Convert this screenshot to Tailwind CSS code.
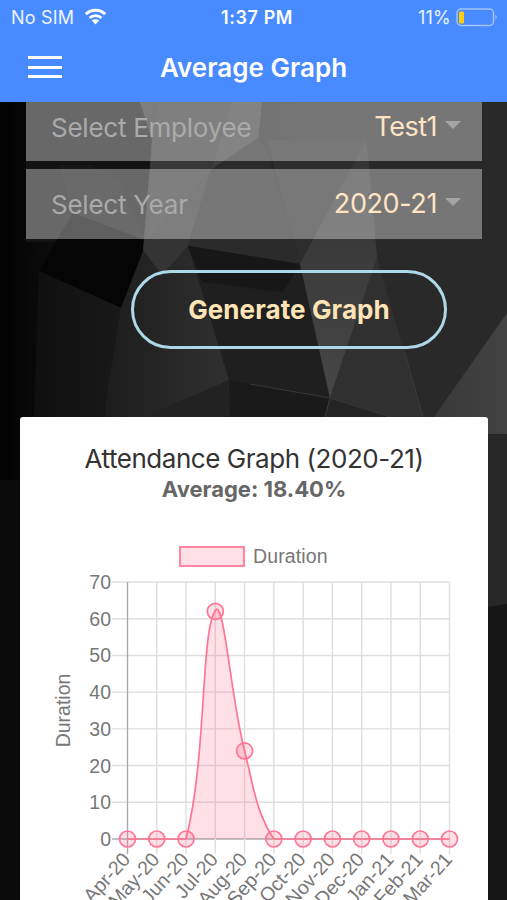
<!DOCTYPE html>
<html lang="en">
<head>
  <meta charset="UTF-8" />
  <meta name="viewport" content="width=device-width, initial-scale=1.0"/>
  <title>Average Graph</title>
  <script src="https://cdn.jsdelivr.net/npm/@tailwindcss/browser@4"></script>
</head>

<body class="bg-[#141414] font-[Inter,sans-serif]">
<div class="relative isolate flex flex-col w-[507px] h-[900px] overflow-hidden">

  <!-- Low-poly backdrop -->
  <svg class="absolute inset-0 -z-10" width="507" height="900" viewBox="0 0 507 900">
    <defs>
      <linearGradient id="base"><stop offset="0" stop-color="#030303"/><stop offset=".3" stop-color="#1c1c1c"/><stop offset=".6" stop-color="#292929"/><stop offset="1" stop-color="#292929"/></linearGradient>
      <linearGradient id="left"><stop offset="0" stop-color="#0f0f0f"/><stop offset="1" stop-color="#191919"/></linearGradient>
      <linearGradient id="mid"><stop offset="0" stop-color="#1d1d1d"/><stop offset="1" stop-color="#303030"/></linearGradient>
      <linearGradient id="shard" x2="0" y2="1"><stop offset="0" stop-color="#333333"/><stop offset="1" stop-color="#464646"/></linearGradient>
      <linearGradient id="corner"><stop offset="0" stop-color="#393939"/><stop offset="1" stop-color="#424242"/></linearGradient>
    </defs>
    <rect width="507" height="900" fill="url(#base)"/>
    <polygon points="26,102 140,102 152,140 147,241 73,213 55,242 26,242" fill="#131313"/>
    <polygon points="90,165 118,180 147,241 73,213 60,165" fill="#171717"/>
    <polygon points="73,213 147,241 121,308 39,271" fill="#050505"/>
    <polygon points="39,271 121,308 106,400 106,417 34,417" fill="url(#left)"/>
    <polygon points="147,241 190,240 229,380 145,417 106,417 106,400 121,308" fill="url(#mid)"/>
    <polygon points="140,102 262,102 258,140 211,170 188,246 162,275 143,250 152,140" fill="#343434"/>
    <polygon points="158,102 232,102 211,170 148,240 152,140" fill="#373737"/>
    <polygon points="232,102 262,102 258,138 211,170" fill="#3d3d3d"/>
    <polygon points="258,138 267,150 300,264 188,246 211,170" fill="#2b2b2b"/>
    <polygon points="267,140 366,140 300,264" fill="#2d2d2d"/>
    <polygon points="188,246 300,264 330,398 229,380" fill="#1f1f1f"/>
    <polygon points="188,246 300,264 283,292 202,282" fill="#171717"/>
    <polygon points="366,140 369,165 377,258 330,398 300,264" fill="url(#shard)"/>
    <polygon points="377,258 403,348 423,417 390,417 330,398" fill="#303030"/>
    <polygon points="229,380 330,398 325,417 230,417" fill="#1a1a1a"/>
    <polygon points="145,417 229,380 209,417" fill="#222222"/>
    <polygon points="330,398 390,417 325,417" fill="#242424"/>
    <polygon points="507,313 507,434 434,434 434,417" fill="url(#corner)"/>
    <polygon points="487,434 507,434 507,604 487,607" fill="#272727"/>
    <polygon points="487,607 507,604 507,900 487,900" fill="#161616"/>
    <polyline points="250,384 330,398 390,417" fill="none" stroke="#383838"/>
    <path d="M404 350 423 417M330 398 325 417" stroke="#3c3c3c"/>
    <rect x="0" y="480" width="20" height="420" fill="#0b0b0b"/>
  </svg>

  <!-- Header -->
  <header class="h-[102px] shrink-0 bg-[#488aff] text-white">
    <div class="h-[34px] grid grid-cols-3 items-center pl-[11px] pr-[9px] text-[18px]">
      <div class="flex items-center gap-[10px] text-white/90">
        <span class="tracking-[0.2px]">No SIM</span>
        <svg class="mt-[-1px]" width="23" height="17" viewBox="0 0 23 17">
          <path d="M1.8 6.2A14 14 0 0 1 21.2 6.2" fill="none" stroke="#fff" stroke-width="3"/>
          <path d="M5.5 10A8.8 8.8 0 0 1 17.5 10" fill="none" stroke="#fff" stroke-width="2.8"/>
          <path d="M7.8 12.6A5.4 5.4 0 0 1 15.2 12.6L11.5 16.5Z" fill="#fff"/>
        </svg>
      </div>
      <span class="pl-[5px] text-center font-semibold tracking-[0.6px] whitespace-nowrap">1:37 PM</span>
      <div class="flex items-center justify-end gap-[5px] text-white/90">
        <span class="tracking-[0.2px]">11%</span>
        <svg width="42" height="19" viewBox="0 0 42 19">
          <rect x="1" y="1" width="36.5" height="16.5" rx="4" fill="none" stroke="#a3c4ff" stroke-width="1.5"/>
          <rect x="3" y="3.5" width="5" height="12" rx="1" fill="#ffcc0a"/>
          <path d="M39.5 6.5Q42 9.2 39.5 12Z" fill="#a3c4ff"/>
        </svg>
      </div>
    </div>
    <div class="h-[66px] relative flex items-center justify-center">
      <button class="absolute left-[28px] top-[22px] w-[34px] h-[22px] flex flex-col justify-between" aria-label="Menu">
        <span class="w-full h-[3px] bg-white"></span>
        <span class="w-full h-[3px] bg-white"></span>
        <span class="w-full h-[3px] bg-white"></span>
      </button>
      <h1 class="text-[26px] font-semibold tracking-[0px]">Average Graph</h1>
    </div>
  </header>

  <!-- Filters -->
  <section class="pl-[26px] pr-[25px] flex flex-col gap-[8px] text-[27px]">
    <div class="h-[59px] pl-[25px] pr-[21px] pb-[9px] flex items-center bg-white/36">
      <span class="text-[26px] text-[#aaaaaa] tracking-[-0.25px]">Select Employee</span>
      <span class="ml-auto text-[#ffe4c4] tracking-[-0.5px]">Test1</span>
      <span class="ml-[8px] mb-[4px] border-x-8 border-x-transparent border-t-8 border-t-[#a5a5a5]"></span>
    </div>
    <div class="h-[70px] pl-[25px] pr-[21px] flex items-center bg-white/36">
      <span class="text-[26px] text-[#aaaaaa] tracking-[-0.25px]">Select Year</span>
      <span class="ml-auto text-[#ffe4c4] tracking-[-0.4px]">2020-21</span>
      <span class="ml-[8px] mb-[4px] border-x-8 border-x-transparent border-t-8 border-t-[#a5a5a5]"></span>
    </div>
  </section>

  <button class="ml-[131px] mt-[31px] w-[316px] h-[79px] shrink-0 rounded-full border-3 border-[#add8e6] text-[26px] font-bold text-[#ffe4b5] tracking-[0.1px]">Generate Graph</button>

  <!-- Chart card -->
  <main class="ml-[20px] mt-[68px] w-[468px] h-[483px] shrink-0 bg-white rounded-t-[3px] overflow-hidden flex flex-col items-center">
    <h2 class="mt-[25px] text-[26px] leading-[34px] text-[#333] tracking-[-0.45px] whitespace-nowrap">Attendance Graph (2020-21)</h2>
    <p class="text-[22px] leading-[26px] font-bold text-[#666] whitespace-nowrap">Average: 18.40%</p>
    <svg class="mt-[32px] shrink-0" width="468" height="366" viewBox="20 534 468 366" font-family="Liberation Sans, Arial, sans-serif" font-size="19.5" fill="#777">
      <rect x="180" y="547" width="64" height="19" fill="#ffe0e6" stroke="#ff85a1" stroke-width="2"/>
      <text x="253" y="563" textLength="74.5">Duration</text>
      <text transform="translate(69.5 710.5) rotate(-90)" text-anchor="middle">Duration</text>
      <g id="grid"></g>
      <path d="M186 839C206.8 758 200.6 632.5 215.2 610.7C224 597 230.4 695.4 244.5 750.6C253.7 786.6 255.9 812 273.8 839Z" fill="#ff6384" fill-opacity=".2"/>
      <path d="M127.5 839H186C206.8 758 200.6 632.5 215.2 610.7C224 597 230.4 695.4 244.5 750.6C253.7 786.6 255.9 812 273.8 839H449.5" fill="none" stroke="#ff7593" stroke-width="1.7"/>
      <g id="points" fill="#ff6384" fill-opacity=".2" stroke="#ff7593" stroke-width="1.7"></g>
    </svg>
  </main>
</div>

<script>
  const months = ["Apr-20", "May-20", "Jun-20", "Jul-20", "Aug-20", "Sep-20", "Oct-20", "Nov-20", "Dec-20", "Jan-21", "Feb-21", "Mar-21"];
  const hours = [0, 0, 0, 62, 24, 0, 0, 0, 0, 0, 0, 0];
  const left = 127.5, right = 449.5, top0 = 582, bottom = 839;
  const xAt = i => left + i * (right - left) / 11;
  const yAt = v => bottom - v * (bottom - top0) / 70;

  let grid = "";
  let points = "";

  // Horizontal lines and scale
  for (let v = 0; v <= 70; v += 10) {
    const color = v === 0 ? "#aaa" : "#dedede";
    grid += `<path d="M112 ${yAt(v)}H${right}" stroke="${color}" stroke-width="1.4"/>
      <text x="111" y="${yAt(v) + 7}" text-anchor="end">${v}</text>`;
  }

  // Vertical lines, month names and points
  months.forEach((month, i) => {
    const color = i === 0 ? "#aaa" : "#dedede";
    grid += `<path d="M${xAt(i)} ${top0}V854" stroke="${color}" stroke-width="1.4"/>
      <text transform="translate(${xAt(i) - 1.5} 855.5) rotate(-48)" text-anchor="end" y="7">${month}</text>`;
    points += `<circle cx="${xAt(i)}" cy="${yAt(hours[i])}" r="8"/>`;
  });

  document.getElementById("grid").innerHTML = grid;
  document.getElementById("points").innerHTML = points;
</script>

</body>
</html>
